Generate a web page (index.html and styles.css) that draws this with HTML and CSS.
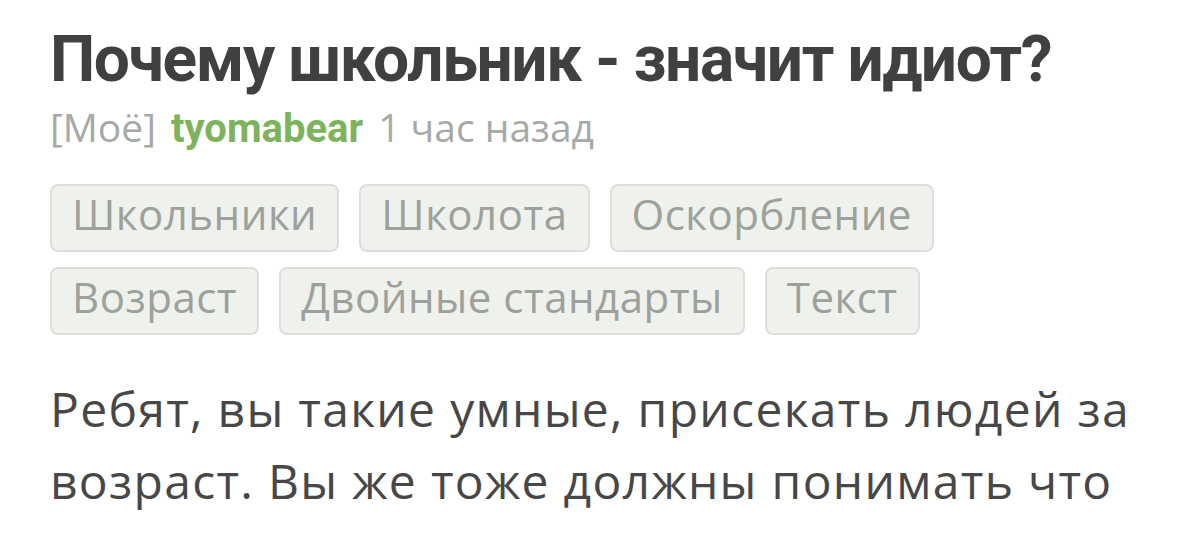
FILE: index.html
```html
<!DOCTYPE html>
<html lang="ru">
<head>
<meta charset="utf-8">
<title>Почему школьник - значит идиот?</title>
<link rel="stylesheet" href="styles.css">
</head>
<body>
<article class="story">
  <h1 class="story-title">Почему школьник - значит идиот?</h1>
  <div class="story-meta">
    <span class="story-mine">[Моё]</span>
    <a class="story-author" href="#">tyomabear</a>
    <span class="story-time">1 час назад</span>
  </div>
  <div class="story-tags">
    <a class="tag" href="#">Школьники</a>
    <a class="tag" href="#">Школота</a>
    <a class="tag" href="#">Оскорбление</a>
    <a class="tag" href="#">Возраст</a>
    <a class="tag" href="#">Двойные стандарты</a>
    <a class="tag" href="#">Текст</a>
  </div>
  <div class="story-text">
    <p>Ребят, вы такие умные, присекать людей за возраст. Вы же тоже должны понимать что</p>
  </div>
</article>
</body>
</html>
```
FILE: styles.css
```css
html, body {
  margin: 0;
  padding: 0;
  background: #ffffff;
}

body {
  font-family: "Open Sans", "Noto Sans", sans-serif;
  overflow: hidden;
}

.story {
  padding: 21px 50px 0 50px;
  width: 1100px;
}

.story-title {
  margin: 0;
  font-family: Roboto, "Noto Sans", sans-serif;
  font-size: 64px;
  line-height: 77px;
  font-weight: 700;
  color: #404040;
  letter-spacing: -1.4px;
}

.story-meta {
  margin-top: 6px;
  font-size: 39px;
  line-height: 46px;
  color: #a6a9a5;
  display: flex;
  gap: 15px;
  align-items: baseline;
}

.story-author {
  font-family: Roboto, "Noto Sans", sans-serif;
  font-size: 40px;
  color: #7db35d;
  font-weight: 700;
  text-decoration: none;
}

.story-tags {
  margin-top: 32px;
  display: flex;
  flex-wrap: wrap;
  column-gap: 20px;
  row-gap: 15px;
}

.tag {
  display: block;
  height: 56px;
  line-height: 56px;
  padding: 0 20px 8px;
  border: 2px solid #dcdfd9;
  border-radius: 8px;
  background: #eff1ed;
  color: #9ca19b;
  font-size: 42px;
  letter-spacing: 0.5px;
  text-decoration: none;
}

.story-text {
  margin-top: 38px;
  font-size: 48px;
  line-height: 72px;
  letter-spacing: 1.3px;
  color: #474747;
}

.story-text p {
  margin: 0;
}
```
